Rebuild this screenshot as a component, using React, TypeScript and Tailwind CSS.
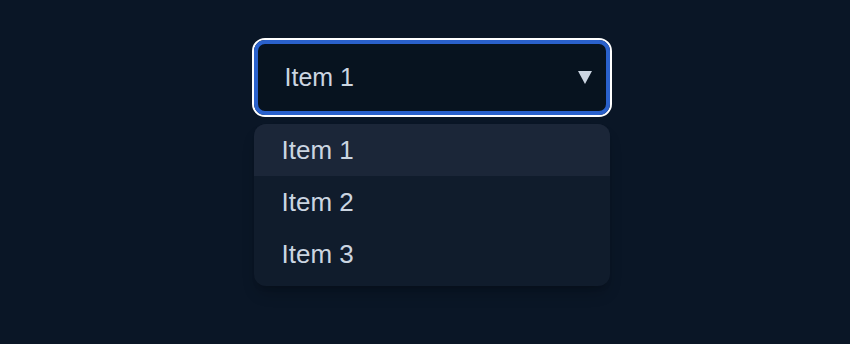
const items = ['Item 1', 'Item 2', 'Item 3'];

export default function App() {
  return (
    <div className="flex min-h-screen justify-center bg-[#0a1626] pl-[13px] pt-[38px] font-['Liberation_Sans',Arial,sans-serif]">
      <div className="w-[360px]">
        <div className="h-[79px] rounded-[13px] border-2 border-white">
          <div className="flex h-full items-center justify-between rounded-[11px] border-4 border-[#2a61cb] bg-[#07131f] pl-[27px] pr-[14px]">
            <span className="text-[25px] leading-none text-[#cbd5e1]">Item 1</span>
            <svg width="14" height="13" viewBox="0 0 14 13" className="-mt-[1px]">
              <polygon points="0,0 14,0 7,13" fill="#cbd5e1" />
            </svg>
          </div>
        </div>

        <ul className="mx-[2px] mt-[7px] overflow-hidden rounded-[12px] bg-[#101c2c] pb-1.5 shadow-lg shadow-black/20">
          {items.map((item, i) => (
            <li
              key={item}
              className={`flex h-[52px] items-center px-[28px] text-[26px] text-[#cbd5e1] ${i === 0 ? 'bg-[#1b2638]' : ''}`}
            >
              {item}
            </li>
          ))}
        </ul>
      </div>
    </div>
  );
}
